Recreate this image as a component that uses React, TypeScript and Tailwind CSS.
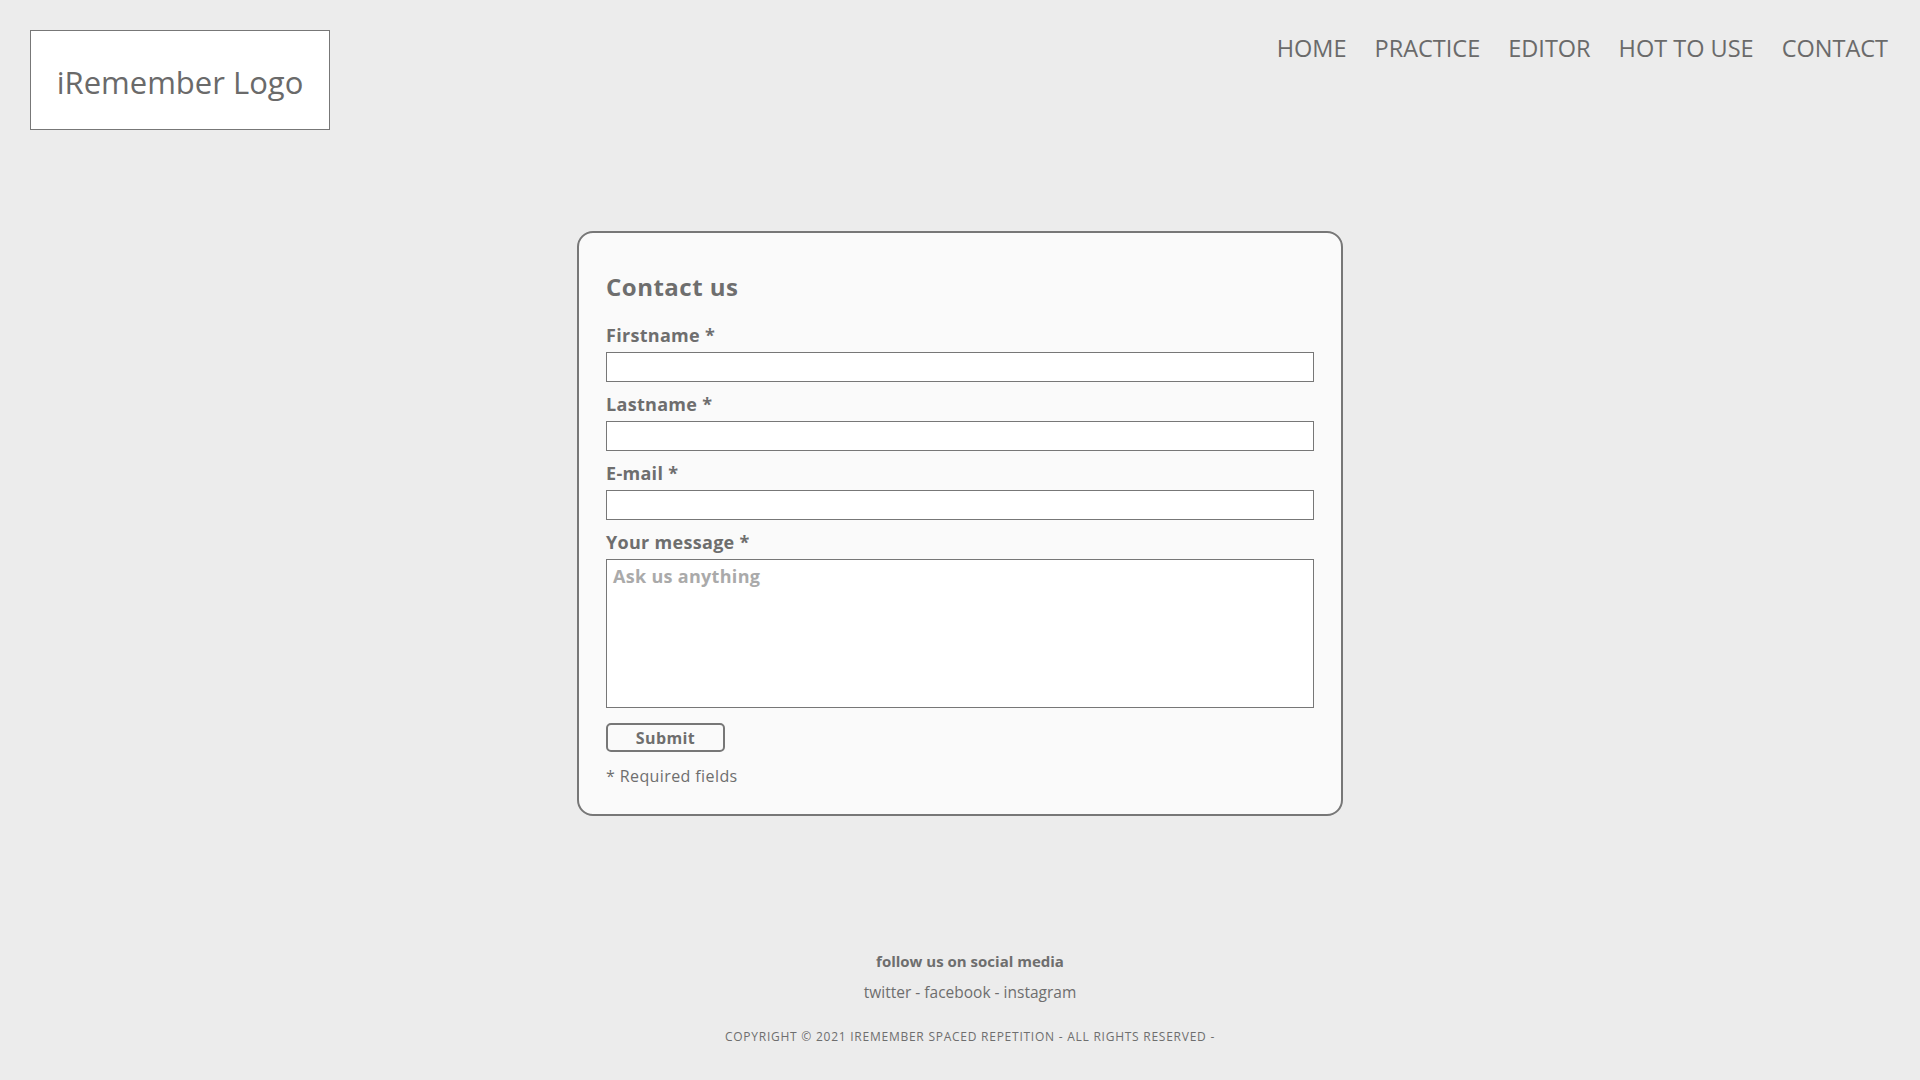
const navLinks = ["HOME", "PRACTICE", "EDITOR", "HOT TO USE", "CONTACT"];

const fields = [
  { id: "firstname", label: "Firstname *", type: "text" },
  { id: "lastname", label: "Lastname *", type: "text" },
  { id: "email", label: "E-mail *", type: "email" },
];

function Header() {
  return (
    <header className="flex items-start justify-between pl-[30px] pr-[32px] pt-[30px]">
      <div className="flex h-[100px] w-[300px] items-center justify-center border border-[#777] bg-white pt-1 text-[31px] text-[#6a6a6a]">
        iRemember Logo
      </div>
      <nav className="mt-[2px] flex gap-[28px] text-[23.5px] leading-[32px] text-[#6a6a6a]">
        {navLinks.map((link) => (
          <a key={link} href="#" className="hover:text-[#444]">
            {link}
          </a>
        ))}
      </nav>
    </header>
  );
}

function ContactForm() {
  return (
    <form className="w-[766px] rounded-[16px] border-2 border-[#777] bg-[#fafafa] px-[27px] pb-[26px] pt-[38px]">
      <h1 className="text-[24px] font-bold leading-[32px] tracking-[0.5px]">Contact us</h1>

      <div className="mt-[20px]">
        {fields.map((f) => (
          <div key={f.id} className="mb-[10px]">
            <label htmlFor={f.id} className="block text-[18px] font-bold leading-[24px] tracking-[0.3px]">
              {f.label}
            </label>
            <input
              id={f.id}
              type={f.type}
              className="mt-[5px] block h-[30px] w-full border border-[#777] bg-white px-[6px] outline-none"
            />
          </div>
        ))}

        <label htmlFor="message" className="block text-[18px] font-bold leading-[24px] tracking-[0.3px]">
          Your message *
        </label>
        <textarea
          id="message"
          placeholder="Ask us anything"
          className="mt-[5px] block h-[149px] w-full resize-none border border-[#777] bg-white px-[6px] py-[4px] text-[18px] font-bold leading-[24px] tracking-[0.3px] outline-none placeholder:text-[#aaa]"
        />
      </div>

      <button
        type="button"
        className="mt-[15px] block h-[29px] w-[119px] rounded-[5px] border-2 border-[#777] bg-[#fafafa] text-[16px] font-bold leading-[24px] tracking-[0.4px] text-[#6e6e6e]"
      >
        Submit
      </button>
      <p className="mt-[12px] text-[16px] leading-[24px] tracking-[0.4px]">* Required fields</p>
    </form>
  );
}

function Footer() {
  return (
    <footer className="mt-[135px] pl-[20px] text-center text-[#6e6e6e]">
      <p className="text-[15px] font-bold leading-[20px]">follow us on social media</p>
      <p className="mt-[9px] text-[15.5px] leading-[24px]">
        <a href="#">twitter</a> - <a href="#">facebook</a> - <a href="#">instagram</a>
      </p>
      <p className="mt-[24px] text-[12px] uppercase leading-[18px] tracking-[0.75px]">
        Copyright © 2021 iRemember Spaced Repetition - All rights reserved -
      </p>
    </footer>
  );
}

export default function App() {
  return (
    <div className="min-h-screen bg-[#ececec] font-['Open_Sans',sans-serif] text-[#6e6e6e]">
      <Header />
      <main className="mt-[101px] flex justify-center">
        <ContactForm />
      </main>
      <Footer />
    </div>
  );
}
